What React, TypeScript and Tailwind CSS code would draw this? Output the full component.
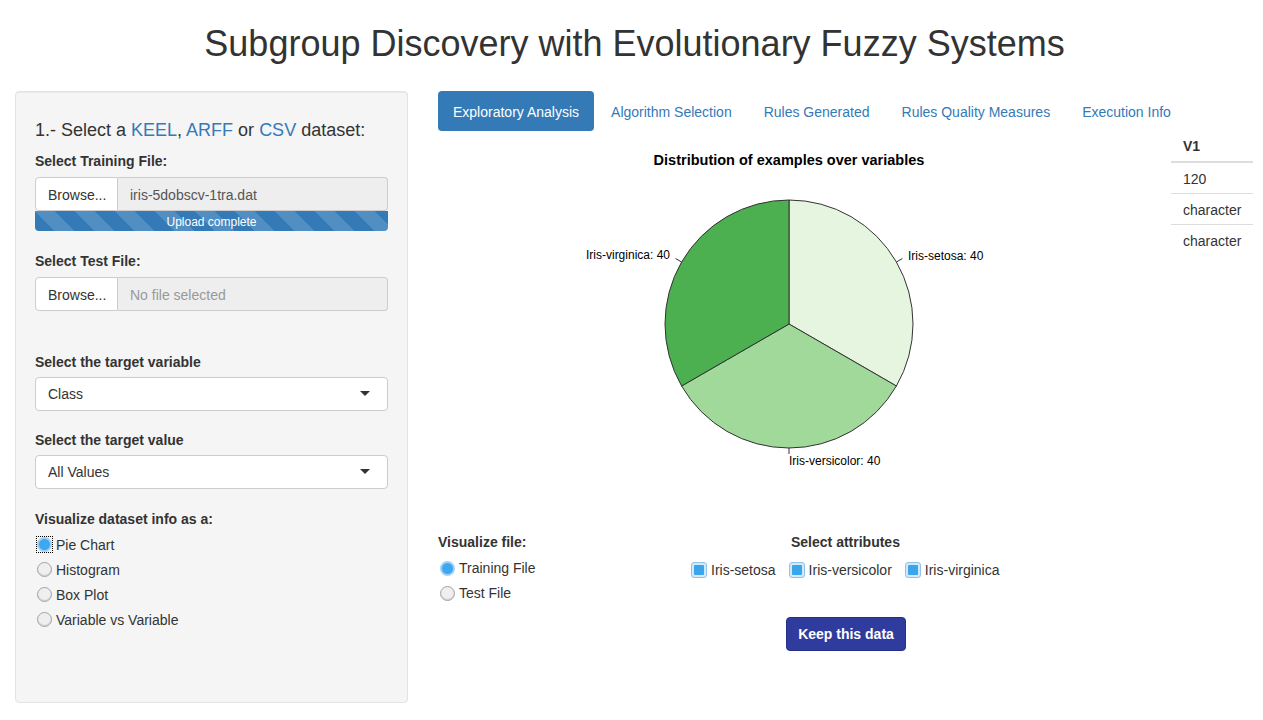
import React from "react";

function Radio({ checked, focus, label }: { checked?: boolean; focus?: boolean; label: string }) {
  return (
    <div className="flex items-center h-[20px] whitespace-nowrap">
      {checked ? (
        <div className={`ml-[2px] w-[15px] h-[15px] flex items-center justify-center ${focus ? "outline outline-1 outline-dotted outline-black" : ""}`}>
          <div className="w-[15px] h-[15px] rounded-full bg-[#3ea7ef] border-2 border-[#9fd0f3]" />
        </div>
      ) : (
        <div className="ml-[2px] w-[15px] h-[15px] rounded-full bg-[#efefef] border border-[#a3a3a3] shadow-[inset_0_-1px_1px_rgba(0,0,0,0.15)]" />
      )}
      <span className="ml-[4px]">{label}</span>
    </div>
  );
}

function Check({ label }: { label: string }) {
  return (
    <div className="flex items-center h-[20px] whitespace-nowrap shrink-0">
      <div className="w-[16px] h-[16px] shrink-0 rounded-[3px] border border-[#8ec3ea] bg-[#d3e9f9] p-[2px]">
        <div className="w-full h-full bg-[#3ba5ec] rounded-[1px]" />
      </div>
      <span className="ml-[4px]">{label}</span>
    </div>
  );
}

function SelectBox({ value }: { value: string }) {
  return (
    <div className="h-[34px] bg-white border border-[#ccc] rounded-[4px] flex items-center justify-between pl-[12px] pr-[17px]">
      <span>{value}</span>
      <div className="w-0 h-0 border-l-[5px] border-r-[5px] border-t-[5px] border-l-transparent border-r-transparent border-t-[#333]" />
    </div>
  );
}

function FileInput({ file, placeholder }: { file?: string; placeholder?: string }) {
  return (
    <div className="flex h-[34px]">
      <div className="w-[83px] bg-white border border-[#ccc] rounded-l-[4px] flex items-center pl-[12px] pt-[2px] text-[#333]">
        Browse...
      </div>
      <div className="flex-1 bg-[#eee] border border-l-0 border-[#ccc] rounded-r-[4px] flex items-center pl-[12px] pt-[2px]">
        {file ? <span className="text-[#555]">{file}</span> : <span className="text-[#999]">{placeholder}</span>}
      </div>
    </div>
  );
}

export default function App() {
  const cx = 351;
  const cy = 193;
  const r = 124;
  const p0 = `${cx},${cy - r}`;
  const p120 = `${(cx + r * Math.sin((2 * Math.PI) / 3)).toFixed(2)},${(cy + r / 2).toFixed(2)}`;
  const p240 = `${(cx - r * Math.sin((2 * Math.PI) / 3)).toFixed(2)},${(cy + r / 2).toFixed(2)}`;

  return (
    <div className="w-[1263px] h-[720px] overflow-hidden bg-white font-['Liberation_Sans',Arial,sans-serif] text-[14px] leading-[20px] text-[#333]">
      <h1 className="h-[91px] pt-[24px] pl-[6px] text-center text-[36px] leading-[39.6px] font-normal">
        Subgroup Discovery with Evolutionary Fuzzy Systems
      </h1>
      <div className="flex pl-[15px]">
        <aside className="w-[393px] h-[612px] shrink-0 bg-[#f5f5f5] border border-[#e3e3e3] rounded-[4px] shadow-[inset_0_1px_1px_rgba(0,0,0,0.05)] px-[19px] pt-[19px]">
          <h4 className="mt-[10px] mb-[10px] text-[18px] leading-[19.8px] font-normal">
            1.- Select a <span className="text-[#337ab7]">KEEL</span>, <span className="text-[#337ab7]">ARFF</span> or{" "}
            <span className="text-[#337ab7]">CSV</span> dataset:
          </h4>
          <div className="font-bold mb-[6px]">Select Training File:</div>
          <FileInput file="iris-5dobscv-1tra.dat" />
          <div className="h-[20px] pt-[1px] rounded-b-[4px] bg-[#337ab7] bg-[linear-gradient(45deg,rgba(255,255,255,.15)_25%,transparent_25%,transparent_50%,rgba(255,255,255,.15)_50%,rgba(255,255,255,.15)_75%,transparent_75%,transparent)] bg-[length:40px_40px] text-white text-[12px] leading-[20px] text-center">
            Upload complete
          </div>
          <div className="font-bold mt-[20px] mb-[6px]">Select Test File:</div>
          <FileInput placeholder="No file selected" />
          <div className="font-bold mt-[41px] mb-[5px]">Select the target variable</div>
          <SelectBox value="Class" />
          <div className="font-bold mt-[19px] mb-[5px]">Select the target value</div>
          <SelectBox value="All Values" />
          <div className="font-bold mt-[20px]">Visualize dataset info as a:</div>
          <div className="mt-[6px] flex flex-col gap-[5px]">
            <Radio checked focus label="Pie Chart" />
            <Radio label="Histogram" />
            <Radio label="Box Plot" />
            <Radio label="Variable vs Variable" />
          </div>
        </aside>

        <main className="ml-[30px] flex-1">
          <nav className="flex h-[40px]">
            <div className="px-[15px] pt-[1px] h-[40px] flex items-center rounded-[4px] bg-[#337ab7] text-white">Exploratory Analysis</div>
            <div className="ml-[2px] px-[15px] pt-[1px] h-[40px] flex items-center text-[#337ab7]">Algorithm Selection</div>
            <div className="ml-[2px] px-[15px] pt-[1px] h-[40px] flex items-center text-[#337ab7]">Rules Generated</div>
            <div className="ml-[2px] px-[15px] pt-[1px] h-[40px] flex items-center text-[#337ab7]">Rules Quality Measures</div>
            <div className="ml-[2px] px-[15px] pt-[1px] h-[40px] flex items-center text-[#337ab7]">Execution Info</div>
          </nav>

          <div className="flex">
            <svg width="702" height="401" viewBox="0 0 702 401" className="block shrink-0">
              <text x="351" y="34" textAnchor="middle" fontSize="14.5" fontWeight="bold" fill="#000" fontFamily="Liberation Sans, Arial, sans-serif">
                Distribution of examples over variables
              </text>
              <path d={`M${cx},${cy} L${p0} A${r},${r} 0 0 1 ${p120} Z`} fill="#e5f5e0" stroke="#333" strokeWidth="1" />
              <path d={`M${cx},${cy} L${p120} A${r},${r} 0 0 1 ${p240} Z`} fill="#a1d99b" stroke="#333" strokeWidth="1" />
              <path d={`M${cx},${cy} L${p240} A${r},${r} 0 0 1 ${p0} Z`} fill="#4caf50" stroke="#333" strokeWidth="1" />
              <line x1="458.4" y1="131" x2="464.4" y2="127.5" stroke="#333" strokeWidth="1" />
              <line x1="243.6" y1="131" x2="237.6" y2="127.5" stroke="#333" strokeWidth="1" />
              <line x1="351" y1="317" x2="351" y2="323" stroke="#333" strokeWidth="1" />
              <g fontSize="12" fill="#000" fontFamily="Liberation Sans, Arial, sans-serif">
                <text x="470" y="129">Iris-setosa: 40</text>
                <text x="232" y="128" textAnchor="end">Iris-virginica: 40</text>
                <text x="351" y="334">Iris-versicolor: 40</text>
              </g>
            </svg>
            <table className="ml-[31px] w-[82px] h-fit border-collapse">
              <thead>
                <tr>
                  <th className="text-left font-bold pl-[12px] pt-[5px] pb-[5px] border-b-2 border-[#ddd]">V1</th>
                </tr>
              </thead>
              <tbody>
                <tr>
                  <td className="pl-[12px] pt-[6px] pb-[4px]">120</td>
                </tr>
                <tr>
                  <td className="pl-[12px] pt-[6px] pb-[4px] border-t border-[#ddd]">character</td>
                </tr>
                <tr>
                  <td className="pl-[12px] pt-[6px] pb-[4px] border-t border-[#ddd]">character</td>
                </tr>
              </tbody>
            </table>
          </div>

          <div className="flex">
            <div className="w-[253px] shrink-0">
              <div className="font-bold">Visualize file:</div>
              <div className="mt-[6px] flex flex-col gap-[5px]">
                <Radio checked label="Training File" />
                <Radio label="Test File" />
              </div>
            </div>
            <div className="w-[310px] shrink-0 flex flex-col">
              <div className="font-bold ml-[100px]">Select attributes</div>
              <div className="mt-[8px] flex gap-[13px] whitespace-nowrap">
                <Check label="Iris-setosa" />
                <Check label="Iris-versicolor" />
                <Check label="Iris-virginica" />
              </div>
              <button className="mt-[37px] self-center w-[120px] h-[34px] rounded-[4px] bg-[#2f3c9e] border border-[#25308a] text-white font-bold">
                Keep this data
              </button>
            </div>
          </div>
        </main>
      </div>
    </div>
  );
}
